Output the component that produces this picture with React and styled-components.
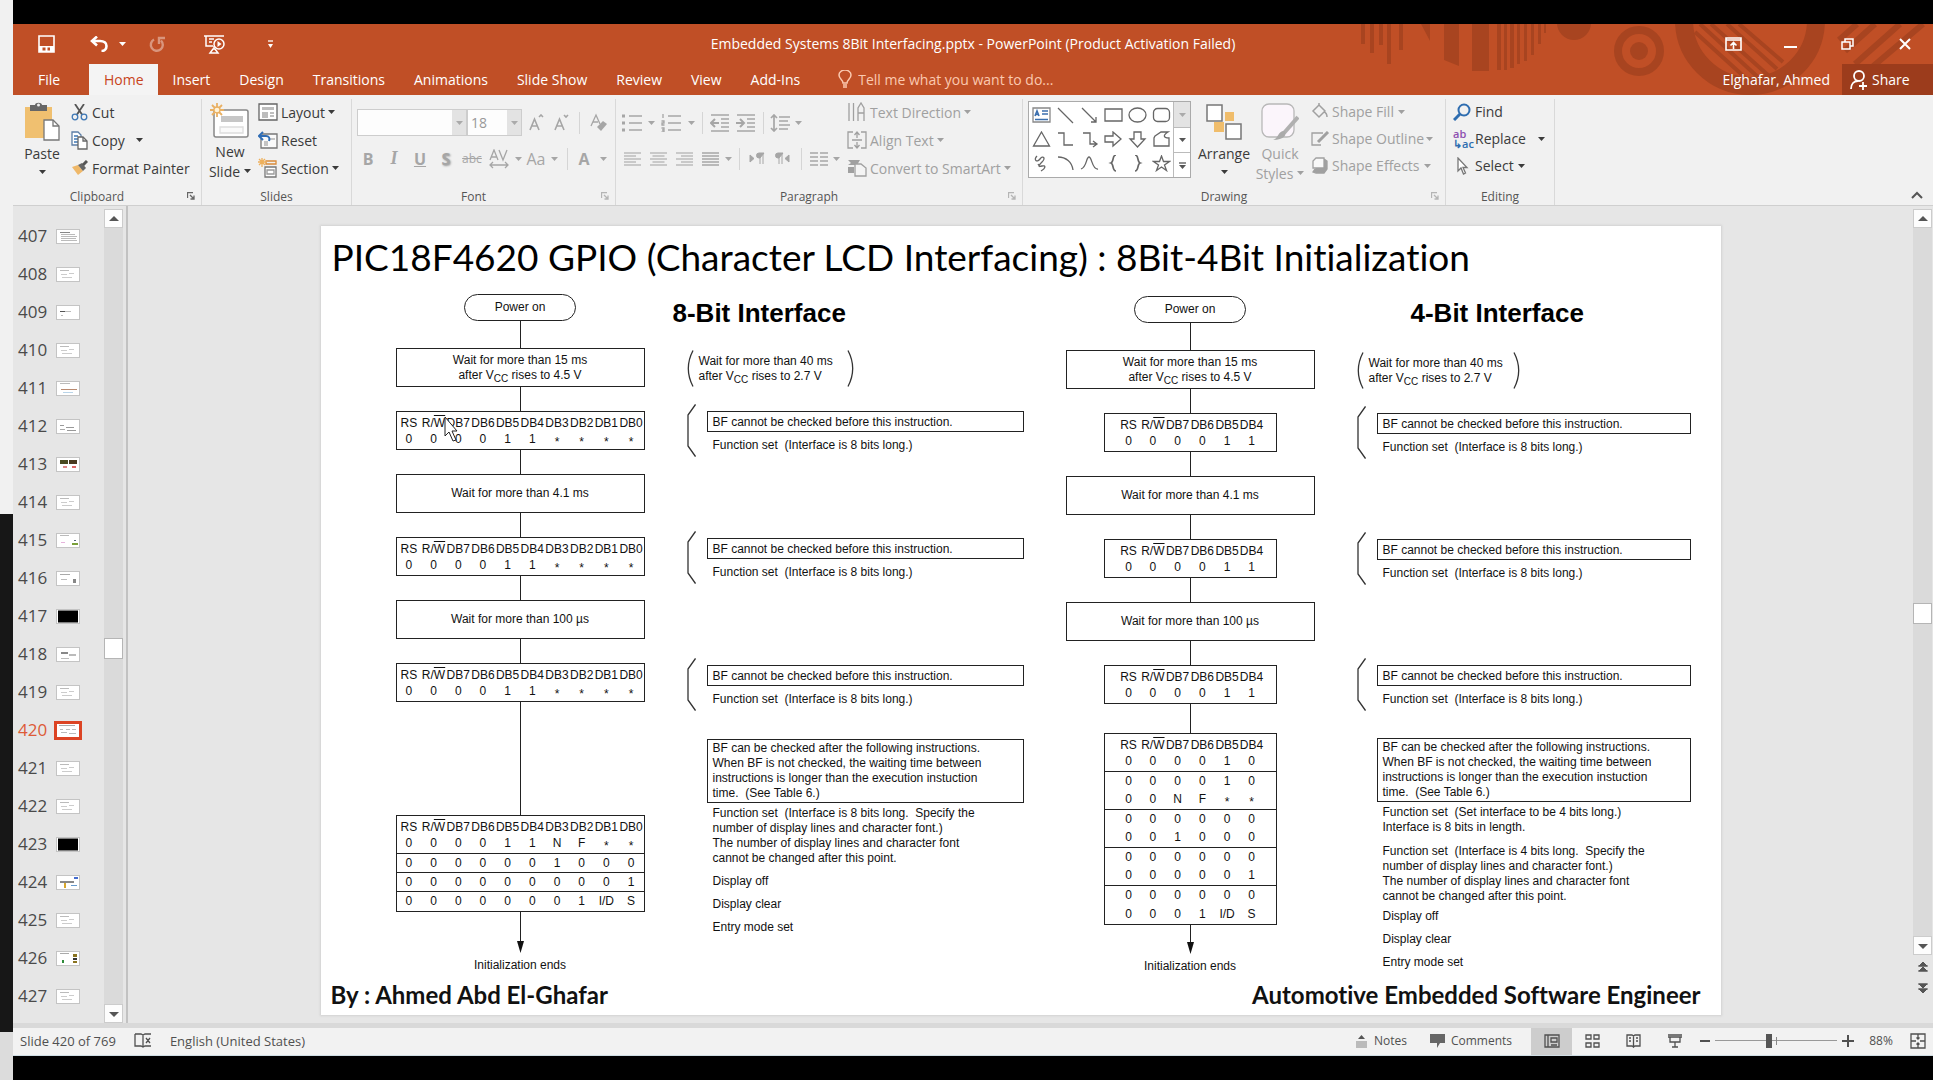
import React from "react";
import styled, { createGlobalStyle, css } from "styled-components";

const UI = '"Open Sans", "Noto Sans", sans-serif';
const SLIDE = 'Lato, "Open Sans", sans-serif';
const CHART = '"Liberation Sans", Arial, sans-serif';

const Global = createGlobalStyle`
  *, *::before, *::after { box-sizing: border-box; }
  body { margin: 0; background: #000; font-family: ${UI}; font-size: 14px; color: #444; }
  button, input, select { font: inherit; color: inherit; }
  button { background: none; border: 0; padding: 0; cursor: pointer; }
  svg { display: block; flex: none; }
`;

/* ---------- frame ---------- */

const Screen = styled.div`
  display: flex;
  min-height: 100vh;
`;
const Edge = styled.div`
  flex: 0 0 13px;
  display: flex;
  flex-direction: column;
`;
const EdgePart = styled.div`
  flex: ${(p) => p.$share} 0 0;
  background: ${(p) => p.$color};
`;
const Desktop = styled.div`
  flex: 1;
  min-width: 0;
  display: flex;
  padding: 24px 0;
  background: #000;
`;
const Window = styled.div`
  flex: 1;
  min-width: 0;
  display: flex;
  flex-direction: column;
  background: #e6e6e6;
`;

/* ---------- title bar and tabs ---------- */

const Header = styled.header`
  position: relative;
  background: #c04f26;
  color: #fff;
  overflow: hidden;
`;
const Decoration = styled.svg`
  position: absolute;
  right: 0;
  top: 0;
`;
const TitleBar = styled.div`
  position: relative;
  display: grid;
  grid-template-columns: 1fr auto 1fr;
  align-items: center;
  height: 40px;
`;
const QuickAccess = styled.div`
  display: flex;
  align-items: center;
  padding-left: 17px;
`;
const TitleButton = styled.button`
  display: grid;
  place-items: center;
  width: ${(p) => p.$w}px;
  height: 32px;
  margin-left: ${(p) => p.$before || 0}px;
  opacity: ${(p) => (p.$dim ? 0.4 : 1)};
`;
const Caption = styled.h1`
  margin: 0;
  font-size: 14px;
  font-weight: 400;
  line-height: 20px;
`;
const WindowButtons = styled.div`
  display: flex;
  justify-content: flex-end;
`;
const TabBar = styled.nav`
  position: relative;
  display: flex;
  align-items: stretch;
  height: 31px;
`;
const Tab = styled.button`
  padding: 0 14px 0 15px;
  line-height: 30px;
  color: ${(p) => (p.$active ? "#c8441b" : "#fff")};
  background: ${(p) => (p.$active ? "#f4f4f4" : "transparent")};
  ${(p) => p.$file && css`width: 76px; padding: 0 4px 0 0;`}
`;
const TellMe = styled.label`
  display: flex;
  align-items: center;
  gap: 6px;
  padding-left: 24px;
  flex: 1;
  color: #fbc9b0;
  input {
    width: 220px;
    padding: 0;
    border: 0;
    outline: 0;
    background: none;
  }
  input::placeholder { color: #fbc9b0; opacity: 1; }
`;
const Account = styled.button`
  padding: 0 12px;
  color: #fff;
`;
const Share = styled.button`
  display: flex;
  align-items: center;
  gap: 4px;
  width: 91px;
  padding-left: 8px;
  color: #fff;
  background: #9c3c1c;
`;

/* ---------- ribbon ---------- */

const Ribbon = styled.div`
  display: flex;
  height: 111px;
  padding-top: 4px;
  background: #f1f1f1;
  border-bottom: 1px solid #cfcfcf;
`;
const GroupBox = styled.section`
  display: flex;
  flex-direction: column;
  flex: 0 0 ${(p) => p.$w}px;
  border-right: 1px solid #d9d9d9;
`;
const GroupBody = styled.div`
  display: flex;
  height: 88px;
`;
const GroupFoot = styled.div`
  display: flex;
  align-items: center;
  height: 18px;
  font-size: 12px;
  color: #555;
  span { flex: 1; text-align: center; }
`;
const Launcher = styled.button`
  display: grid;
  place-items: center;
  width: 20px;
  height: 18px;
  color: ${(p) => (p.$dim ? "#b5b5b5" : "#666")};
`;
const BigButton = styled.button`
  display: flex;
  flex-direction: column;
  align-items: center;
  width: ${(p) => p.$w}px;
  padding-top: 3px;
  line-height: 20px;
  color: ${(p) => (p.$dim ? "#a0a0a0" : "#3b3b3b")};
  svg:first-child { margin-bottom: 3px; }
`;
const WithCaret = styled.span`
  display: flex;
  align-items: center;
  gap: 4px;
`;
const CaretBelow = styled.span`
  padding-top: 6px;
`;
const Stack = styled.div`
  display: flex;
  flex-direction: column;
  align-items: flex-start;
  padding-left: ${(p) => p.$pad || 0}px;
`;
const RowButton = styled.button`
  display: flex;
  align-items: center;
  gap: ${(p) => p.$gap || 4}px;
  height: ${(p) => p.$h || 28}px;
  padding-bottom: 2px;
  color: ${(p) => (p.$dim ? "#a0a0a0" : "#3b3b3b")};
  white-space: nowrap;
`;
const Tools = styled.div`
  display: flex;
  flex-direction: column;
  gap: 9px;
  width: ${(p) => p.$w}px;
  padding: 10px 0 0 3px;
`;
const ToolRow = styled.div`
  display: flex;
  height: 27px;
`;
const Tool = styled.button`
  display: grid;
  place-items: center;
  width: ${(p) => p.$w || 26}px;
  color: #a6a6a6;
  font-size: 16px;
  ${(p) => p.$bold && css`font-weight: 700;`}
  ${(p) => p.$serif && css`font-family: "Liberation Serif", serif; font-style: italic; font-weight: 700; font-size: 18px;`}
  ${(p) => p.$under && css`text-decoration: underline;`}
  ${(p) => p.$strike && css`text-decoration: line-through; font-size: 12px;`}
  ${(p) => p.$shadow && css`text-shadow: 1px 1px 2px #999;`}
`;
const Divider = styled.span`
  width: ${(p) => p.$w}px;
  background: linear-gradient(#d5d5d5, #d5d5d5) center / 1px 22px no-repeat;
`;
const Combo = styled.label`
  display: flex;
  width: ${(p) => p.$w}px;
  height: 27px;
  border: 1px solid #cdcdcd;
  background: #fdfdfd;
  color: #999;
  select {
    flex: 1;
    min-width: 0;
    padding: 0 3px;
    border: 0;
    outline: 0;
    appearance: none;
    background: none;
  }
`;
const ComboArrow = styled.span`
  display: grid;
  place-items: center;
  width: 14px;
  background: #e3e3e3;
  color: #aaa;
`;
const ComboPair = styled.div`
  display: flex;
  padding: 0 1px 0 2px;
`;
const Gallery = styled.div`
  display: flex;
  width: 163px;
  height: 77px;
  margin: 2px 6px 0 5px;
  border: 1px solid #aaa;
  background: #fff;
`;
const GalleryGrid = styled.div`
  flex: 1;
  display: grid;
  grid-template-columns: repeat(6, 24px);
  grid-auto-rows: 24px;
  align-content: center;
  button { display: grid; place-items: center; color: #666; }
`;
const GalleryNav = styled.div`
  display: grid;
  grid-template-rows: repeat(3, 1fr);
  width: 17px;
  border-left: 1px solid #bbb;
  button { display: grid; place-items: center; background: #fff; color: #555; border-top: 1px solid #bbb; }
  button:first-child { background: #e3e3e3; color: #aaa; border-top: 0; }
`;
const RibbonRest = styled.div`
  flex: 1;
  display: flex;
  align-items: flex-end;
  justify-content: flex-end;
  padding: 0 10px 3px 0;
  color: #555;
`;

/* ---------- work area ---------- */

const Work = styled.main`
  flex: 1;
  display: flex;
  min-height: 0;
  padding-right: 1px;
  border-bottom: 5px solid #d9d9d9;
`;
const SlideList = styled.ol`
  width: 91px;
  margin: 0;
  padding: 11px 0 0 5px;
  list-style: none;
`;
const SlideItem = styled.li`
  button {
    display: flex;
    align-items: center;
    gap: ${(p) => (p.$active ? 7 : 9)}px;
    height: 38px;
    font-size: 17px;
    line-height: 38px;
    color: ${(p) => (p.$active ? "#dd5a37" : "#4a4a4a")};
  }
`;
const Thumb = styled.svg`
  border: 1px solid #c4c4c4;
  background: #fff;
  ${(p) => p.$active && css`border: 3px solid #dc4424;`}
`;
const Bar = styled.div`
  display: flex;
  flex-direction: column;
  width: 19px;
  padding-top: 3px;
`;
const BarButton = styled.button`
  display: grid;
  place-items: center;
  height: 19px;
  background: #fdfdfd;
  border: 1px solid #ccc;
  color: #555;
`;
const BarTrack = styled.div`
  flex: ${(p) => p.$share} 0 0;
  background: #dadada;
`;
const BarThumb = styled.div`
  height: 21px;
  background: #fff;
  border: 1px solid #b5b5b5;
`;
const NavButton = styled.button`
  display: grid;
  place-items: center;
  height: 22px;
  color: #555;
`;
const NavEnd = styled.div`
  height: 24px;
`;
const Splitter = styled.div`
  width: 5px;
  border-right: 2px solid #c2c2c2;
`;
const Canvas = styled.div`
  flex: 1;
  min-width: 0;
  padding-top: 20px;
`;

/* ---------- slide ---------- */

const Slide = styled.article`
  position: relative;
  width: 1400px;
  max-width: 100%;
  min-height: 789px;
  margin: 0 auto;
  background: #fff;
  box-shadow: 0 0 2px 1px #d2d2d2;
  color: #111;
`;
const SlideTitle = styled.h2`
  margin: 0;
  padding: 7px 0 0 11px;
  font: 400 37px/48px ${SLIDE};
  font-variant-ligatures: none;
  color: #000;
  height: 68px;
  white-space: nowrap;
`;
const Charts = styled.div`
  display: grid;
  grid-template-columns: 249px 337px 249px 334px;
  column-gap: 42px;
  padding-left: 75px;
  height: 685px;
  font: 12px/15px ${CHART};
  white-space: pre;
`;
const Flow = styled.div`
  display: flex;
  flex-direction: column;
  align-items: center;
  padding-top: ${(p) => p.$top}px;
  text-align: center;
`;
const Pill = styled.div`
  display: grid;
  place-items: center;
  width: 112px;
  height: 27px;
  border: 1px solid #222;
  border-radius: 14px;
`;
const Link = styled.div`
  width: 1px;
  height: ${(p) => p.$h || 24}px;
  background: #222;
`;
const Step = styled.div`
  display: grid;
  place-items: center;
  align-content: center;
  width: 100%;
  height: 39px;
  border: 1px solid #222;
`;
const Vcc = styled.sub`
  font-size: 10px;
  line-height: 0;
`;
const BitBox = styled.div`
  border: 1px solid #222;
  width: ${(p) => (p.$narrow ? 173 : 249)}px;
`;
const Bits = styled.table`
  width: 100%;
  border-collapse: collapse;
  table-layout: fixed;
  th, td { padding: 0; font-weight: 400; height: 19px; text-align: center; }
  th { height: 20px; padding-top: 2px; }
  tbody tr:first-child td { height: 17px; padding-bottom: 2px; }
  tr.ruled { border-top: 1px solid #222; }
  ${(p) => p.$narrow && css`
    th:first-child, td:first-child, th:last-child, td:last-child { width: 36px; }
    th:first-child, td:first-child { padding-left: 12px; }
    th:last-child, td:last-child { padding-right: 12px; }
  `}
`;
const Over = styled.span`
  text-decoration: overline;
`;
const Star = styled.span`
  vertical-align: sub;
  line-height: 0;
`;
const Arrow = styled.svg`
  margin-bottom: 5px;
`;
const Notes = styled.div``;
const Heading = styled.h3`
  margin: 0 0 0 ${(p) => p.$indent}px;
  height: ${(p) => p.$h}px;
  font: 700 26px/38px ${CHART};
  color: #000;
`;
const Aside = styled.div`
  display: flex;
  align-items: center;
  gap: 5px;
  height: 37px;
  margin-bottom: 17px;
`;
const Spacer = styled.span`
  width: ${(p) => p.$w}px;
`;
const Condition = styled.div`
  display: flex;
  gap: 11px;
  height: 53px;
  margin-bottom: ${(p) => p.$after}px;
`;
const ConditionText = styled.div`
  flex: 1;
  padding-top: 7px;
`;
const Framed = styled.p`
  margin: 0;
  padding: ${(p) => (p.$tall ? 1 : 2)}px 0 1px 5px;
  border: 1px solid #222;
  line-height: ${(p) => (p.$tall ? 15 : 16)}px;
`;
const Plain = styled.p`
  margin: 0;
  padding: ${(p) => p.$before}px 0 0 6px;
`;
const AfterChecks = styled.div`
  padding-left: 20px;
`;
const SlideFoot = styled.footer`
  display: flex;
  justify-content: space-between;
  padding: 0 20px 0 10px;
  font: 700 24px/32px ${SLIDE};
  font-variant-ligatures: none;
  color: #111;
`;
const Pointer = styled.svg`
  position: absolute;
  left: 123px;
  top: 190px;
`;

/* ---------- status bar ---------- */

const Status = styled.footer`
  display: flex;
  align-items: stretch;
  height: 28px;
  background: #f2f2f2;
  border-bottom: 1px solid #cfdde4;
  font-size: 12px;
  color: #505050;
`;
const StatusText = styled.span`
  display: flex;
  align-items: center;
  padding: 0 0 2px ${(p) => p.$l || 0}px;
  font-size: 13px;
`;
const StatusButton = styled.button`
  display: flex;
  align-items: center;
  justify-content: center;
  gap: 6px;
  width: ${(p) => p.$w}px;
  padding-bottom: 2px;
  background: ${(p) => (p.$on ? "#cdcdcd" : "transparent")};
`;
const Spring = styled.span`
  flex: 1;
`;
const Zoom = styled.input`
  appearance: none;
  width: 122px;
  height: 25px;
  margin: 0;
  background:
    linear-gradient(#888, #888) center / 1px 8px no-repeat,
    linear-gradient(#999, #999) center / 100% 1px no-repeat;
  &::-webkit-slider-thumb {
    appearance: none;
    width: 6px;
    height: 14px;
    background: #555;
  }
`;

/* ---------- icons ---------- */

const Svg = ({ w = 18, h = w, children, ...rest }) => (
  <svg width={w} height={h} viewBox={`0 0 ${w} ${h}`} fill="none" stroke="currentColor" strokeWidth="1.3" aria-hidden="true" {...rest}>
    {children}
  </svg>
);
const Caret = () => (
  <Svg w={7} h={4}><path d="M0 0h7L3.500 4z" fill="currentColor" stroke="none" /></Svg>
);
const Tri = ({ up }) => (
  <Svg w={10} h={6}><path d={up ? "M0 5h10L5 0z" : "M0 1h10L5 6z"} fill="currentColor" stroke="none" /></Svg>
);
const DoubleTri = ({ up }) => (
  <Svg w={10} h={11}>
    <path d={up ? "M1 5h8L5 1zM1 10h8L5 6zM0 5h10M0 10h10" : "M1 1h8L5 5zM1 6h8L5 10zM0 1h10M0 6h10"} fill="currentColor" stroke="currentColor" strokeWidth="1" />
  </Svg>
);
const SaveIcon = () => (
  <Svg w={17} h={18} strokeWidth="1.600"><path d="M1 1h15v16H1z" /><path d="M1 11h15v6H1z" fill="#fff" stroke="none" /><path d="M4.500 12.500H7.500v3h-3zM9.500 12.500h2.500v3H9.500z" fill="#c04f26" stroke="none" /></Svg>
);
const UndoIcon = () => (
  <Svg w={18} h={16} strokeWidth="2.600"><path d="M2 5h8c4 0 6.500 2 6.500 5s-2 5-5 5" /><path d="M7 0.500L2 5l5 4.500" /></Svg>
);
const RedoIcon = () => (
  <Svg w={17} h={17} strokeWidth="2.400"><path d="M5 3.500A6 6 0 1 0 12 4.500" /><path d="M10 8V2h6" /></Svg>
);
const ShowIcon = () => (
  <Svg w={21} h={19} strokeWidth="1.500"><path d="M0 1h20M2 1v10h7M10 11v3M6 18h8l-3-4H9zM5 4h5M5 7h3" /><circle cx="15" cy="9" r="5" /><path d="M13.500 6l4 3-4 3z" fill="currentColor" stroke="none" /></Svg>
);
const PasteIcon = () => (
  <Svg w={36} h={39}>
    <path d="M1 5h27v31H1z" fill="#f0c070" stroke="none" />
    <path d="M6 3h5c0-3 7-3 7 0h5v6H6z" fill="#666" stroke="none" />
    <circle cx="14.500" cy="3" r="1.500" fill="#eee" stroke="none" />
    <path d="M20 18h9l6 6v14H20z" fill="#fff" stroke="#777" /><path d="M29 18v6h6" stroke="#777" />
  </Svg>
);
const CutIcon = () => (
  <Svg w={17} h={17}><path d="M4 0l7 10.500M13 0L6 10.500" stroke="#555" strokeWidth="1.800" /><circle cx="4" cy="13" r="2.800" stroke="#3f78b5" /><circle cx="13" cy="13" r="2.800" stroke="#3f78b5" /></Svg>
);
const CopyIcon = () => (
  <Svg w={17} h={19}><path d="M1 1h6l3 3v10H1z" fill="#fff" stroke="#5c7ea6" /><path d="M3 5h4M3 8h4M3 11h4" stroke="#3f78b5" /><path d="M7 6h5l4 4v8H7z" fill="#fff" stroke="#666" /><path d="M12 6v4h4" stroke="#666" /></Svg>
);
const BrushIcon = () => (
  <Svg w={17} h={16}><path d="M1 7l6-2 5 6-5 4z" fill="#efb869" stroke="none" /><path d="M7 5l4-2 4 5-3 3z" fill="#666" stroke="none" /><path d="M12 5l4-4" stroke="#555" strokeWidth="3" /></Svg>
);
const NewSlideIcon = () => (
  <Svg w={40} h={37}>
    <rect x="4" y="8" width="34" height="27" rx="2" fill="#fff" stroke="#888" strokeWidth="1.500" />
    <path d="M11 14h22v6H11z" fill="#c6c6c6" stroke="none" /><path d="M10 25h23v6H10z" fill="#fafafa" stroke="#ddd" />
    <path d="M7 1v14M0 8h14M2 3l10 10M12 3L2 13" stroke="#e9b063" strokeWidth="1.800" /><circle cx="7" cy="8" r="3" fill="#fff3d8" stroke="#e9b063" />
  </Svg>
);
const LayoutIcon = () => (
  <Svg w={20} h={18}><path d="M1 1h18v16H1z" fill="#fff" stroke="#666" /><path d="M4 4h12v3H4zM4 9h6v6H4z" fill="#bdbdbd" stroke="none" /><path d="M12 10h4M12 13h4" stroke="#aaa" /></Svg>
);
const ResetIcon = () => (
  <Svg w={20} h={18}><path d="M4 3h15v14H3V8" fill="#fafafa" stroke="#777" /><path d="M6 10h4v5H6zM12 7h5v2h-5z" fill="#c4c4c4" stroke="none" /><path d="M1 5h7c3 0 4 2 3 5M5 1L1 5l4 4" stroke="#2f6db5" strokeWidth="2" /></Svg>
);
const SectionIcon = () => (
  <Svg w={20} h={20}><path d="M8 3h10v3H8z" stroke="#d98b3a" /><path d="M7 9h11v10H7z" fill="#fff" stroke="#777" /><path d="M9 12h7v4H9z" stroke="#999" /><path d="M4 0v9M0 4h9M1 1l6 6M7 1L1 7" stroke="#eeb05c" /></Svg>
);
const LauncherIcon = () => (
  <Svg w={8} h={8}><path d="M0.500 6V0.500H6" /><path d="M3 3l4 4M7 3.500V7H3.500" /></Svg>
);
const ClearIcon = () => (
  <Svg w={19} h={20}><path d="M2 13L7 2l4 9M4 9h5" /><path d="M8 14l6-6 4 3-6 7z" fill="currentColor" stroke="none" /></Svg>
);
const SpacingAV = () => (
  <Svg w={20} h={20}><path d="M1 11L5 1l4 10M2.500 8h5M10 1l4 10 4-10M1 16h18M4 13l-3 3 3 3M16 13l3 3-3 3" /></Svg>
);
const ListIcon = ({ numbered }) => (
  <Svg w={20} h={18}>
    <path d="M7 2h13M7 9h13M7 16h13" />
    {numbered ? <path d="M2 0v4M0.500 7h2.500v2H1v2h2.500M0.500 14H3v4H0.500M1 16h2" /> : <path d="M0 2h3M0 9h3M0 16h3" strokeWidth="3" />}
  </Svg>
);
const IndentIcon = ({ out }) => (
  <Svg w={20} h={18}><path d="M1 1h18M11 5h8M11 9h8M11 13h8M1 17h18" />{out ? <path d="M9 9H1M5 5L1 9l4 4" strokeWidth="2" /> : <path d="M0 9h8M4 5l4 4-4 4" strokeWidth="2" />}</Svg>
);
const LineSpaceIcon = () => (
  <Svg w={20} h={18}><path d="M4 1v16M1 4l3-3 3 3M1 14l3 3 3-3" strokeWidth="1.700" /><path d="M9 3h11M9 7h9M9 11h11M9 15h9" /></Svg>
);
const AlignIcon = ({ kind }) => (
  <Svg w={17} h={14} strokeWidth="1.500" opacity={kind === "full" ? 1 : 0.7}>
    {[1, 4, 7, 10, 13].map((y, i) => {
      const short = i % 2 === 1 && kind !== "full" ? 5 : 0;
      const a = kind === "right" ? short : kind === "center" ? short / 2 : 0;
      const b = kind === "left" ? 17 - short : kind === "center" ? 17 - short / 2 : 17;
      return <path key={y} d={`M${a} ${y}H${b}`} />;
    })}
  </Svg>
);
const ParaIcon = ({ rtl }) => (
  <Svg w={16} h={14} strokeWidth="1">
    {rtl
      ? <path d="M5 1v11M8 1v11M9 1H4a2.500 2.500 0 0 0 0 5h1zM15 3v7l-4-3.500z" fill="currentColor" />
      : <path d="M11 1v11M14 1v11M15 1h-5a2.500 2.500 0 0 0 0 5h1zM1 3v7l4-3.500z" fill="currentColor" />}
  </Svg>
);
const ColumnsIcon = () => (
  <Svg w={18} h={14} strokeWidth="1.500"><path d="M0 1h8M0 5h8M0 9h8M0 13h8M10 1h8M10 5h8M10 9h8M10 13h8" /></Svg>
);
const DirectionIcon = () => (
  <Svg w={20} h={20}><path d="M2 1v18M6.500 1v18M11 19V6l3-5 3 5v13M11 11h6" /></Svg>
);
const AlignTextIcon = () => (
  <Svg w={20} h={18}><path d="M6 1H1v16h5M14 1h5v16h-5M5 9h10M10 1v6M10 17v-6M7.500 4L10 1l2.500 3M7.500 14l2.500 3 2.500-3" /></Svg>
);
const SmartIcon = () => (
  <Svg w={20} h={18}><path d="M1 1h12l-3 5H1l3-2zM1 8h6v6H1z" fill="currentColor" stroke="none" /><path d="M8 5h6l5 4v8H8z" fill="#f4f4f4" /></Svg>
);
const ArrangeIcon = () => (
  <Svg w={38} h={39}><path d="M20 10h9v9h-9zM9 20h10v10H9z" fill="#f0bd6b" stroke="none" /><path d="M2 3h15v16H2zM21 22h15v15H21z" fill="#fff" stroke="#777" strokeWidth="1.500" /></Svg>
);
const QuickIcon = () => (
  <Svg w={38} h={39}><rect x="1" y="2" width="32" height="33" rx="7" fill="#fbf5fb" stroke="#b8b8b8" /><path d="M37 15L23 31" stroke="#b0b0b0" strokeWidth="4" /><path d="M12 38c5-1 5-9 11-9 4 3 0 9-11 9z" fill="#aaa" stroke="none" /></Svg>
);
const FillIcon = () => (
  <Svg w={17} h={17}><path d="M8 2l6 6-6 6-6-6zM8 2V0M13 9c3 1 3 3 3 5" strokeWidth="1.500" /></Svg>
);
const OutlineIcon = () => (
  <Svg w={19} h={15}><path d="M12 2H1v12h9" /><path d="M7 11L17 1" strokeWidth="3" /></Svg>
);
const EffectsIcon = () => (
  <Svg w={17} h={17}><path d="M4 12l-2 3 3 1h8l3-4V4l-3-2" fill="currentColor" /><path d="M5 1h8v10H2V4z" fill="#f8f8f8" /></Svg>
);
const FindIcon = () => (
  <Svg w={18} h={18} stroke="#2e6db0" strokeWidth="2"><circle cx="11" cy="7" r="5.500" /><path d="M7 11l-6 6" strokeWidth="3" /></Svg>
);
const SelectIcon = () => (
  <Svg w={18} h={18}><path d="M5 1v13l3-3 2.500 6 2-1-2.500-5.500h4z" fill="#fff" stroke="#777" /></Svg>
);
const ReplaceMark = styled.span`
  display: grid;
  grid-template-columns: 1fr;
  width: 18px;
  font-size: 11px;
  font-weight: 600;
  line-height: 10px;
  text-align: left;
  b { font-weight: 600; color: #8d4fb0; }
  i { font-style: normal; text-align: right; color: #2e6db0; }
`;

const shapes = [
  <><path d="M1 1h17v14H1z" stroke="#888" /><path d="M3 9l2-5 2 5M4 7.500h2" stroke="#3b6fae" strokeWidth="1.600" /><path d="M10 4h6M10 7h6M3 12.500h13" stroke="#3b6fae" /></>,
  <path d="M2 1l15 15" />,
  <path d="M2 1l14 14M16 10v5h-5" />,
  <path d="M1 2h17v12H1z" />,
  <ellipse cx="9.500" cy="8" rx="8.500" ry="7" />,
  <rect x="1.500" y="1.500" width="16" height="13" rx="4" />,
  <path d="M9.500 1l8 14h-16z" />,
  <path d="M2 2h6v12h9" />,
  <path d="M3 2h7v11h6M13 10l4 3-4 3" />,
  <path d="M1 5h8V1l8 7-8 7v-4H1z" />,
  <path d="M6 1h7v7h4l-7.500 8L2 8h4z" />,
  <path d="M3 5l6-4h7c-5 3-5 6 1 6v8H2V7z" />,
  <path d="M5 1c-4 4 0 7 3 3 3-4 6-1 2 3s-4 5 0 4 4 2-1 5M6 9l2 3" />,
  <path d="M2 2c8 0 14 5 15 13" />,
  <path d="M1 14C7 12 6 2 9 2s3 13 9 12" />,
  <path d="M12 0c-4 0-2 7-5 8 3 1 1 8 5 8" strokeWidth="1.700" />,
  <path d="M7 0c4 0 2 7 5 8-3 1-1 8-5 8" strokeWidth="1.700" />,
  <path d="M9.500 1l2 5.500h6L12.500 10l2 5.500-5-3.500-5 3.500 2-5.500-5-3.500h6z" />,
];
const shapeNames = ["Text box", "Line", "Arrow line", "Rectangle", "Oval", "Rounded rectangle", "Triangle", "Elbow", "Elbow arrow", "Right arrow", "Down arrow", "Freeform", "Scribble", "Arc", "Curve", "Left brace", "Right brace", "Star"];

/* ---------- pieces ---------- */

const Group = ({ name, width, launcher, dim, children }) => (
  <GroupBox $w={width} aria-label={name}>
    <GroupBody>{children}</GroupBody>
    <GroupFoot>
      <span>{name}</span>
      {launcher && <Launcher $dim={dim} aria-label={`${name} settings`}><LauncherIcon /></Launcher>}
    </GroupFoot>
  </GroupBox>
);
const Drop = ({ w = 10 }) => <Tool $w={w} aria-label="More"><Caret /></Tool>;

const Scroll = ({ before, after, children }) => (
  <Bar>
    <BarButton aria-label="Scroll up"><Tri up /></BarButton>
    <BarTrack $share={before} />
    <BarThumb />
    <BarTrack $share={after} />
    <BarButton aria-label="Scroll down"><Tri /></BarButton>
    {children}
  </Bar>
);

const G = "#bbb";
const thumbArt = {
  407: [["#888", 3, 2, 10, 1], [G, 4, 4, 14, 1], [G, 4, 6, 16, 1], [G, 4, 8, 15, 1], [G, 4, 10, 16, 1]],
  409: [["#555", 3, 5, 5, 1], [G, 8, 5, 6, 1], [G, 4, 9, 2, 1]],
  411: [[G, 3, 1, 10, 1], ["#b98a70", 4, 7, 16, 1], ["#b9d4e8", 6, 10, 10, 1]],
  412: [["#999", 3, 5, 4, 1], ["#999", 9, 7, 8, 1], ["#aaa", 3, 9, 5, 1], ["#999", 10, 10, 9, 1]],
  413: [["#4a4a20", 3, 2, 8, 4], ["#4a3a20", 12, 2, 8, 4], ["#d88", 6, 8, 4, 2], ["#d66", 15, 8, 4, 2]],
  415: [[G, 3, 1, 9, 1], ["#e6b3dc", 4, 8, 4, 1], ["#7aa03a", 15, 9, 6, 2], ["#567", 17, 6, 2, 1]],
  416: [["#aaa", 3, 2, 10, 1], [G, 4, 7, 6, 1], ["#888", 16, 7, 3, 4]],
  418: [["#888", 4, 4, 7, 2], [G, 12, 6, 7, 2], [G, 4, 10, 8, 1]],
  420: [["#aaa", 2, 1, 16, 1], [G, 3, 5, 3, 1], [G, 9, 5, 4, 1], [G, 15, 5, 4, 1], [G, 4, 8, 6, 1], [G, 12, 9, 7, 1]],
  424: [["#446ccf", 17, 1, 4, 2], ["#888", 3, 5, 14, 2], ["#d9a72c", 7, 7, 2, 5], ["#69c", 14, 9, 6, 1]],
  426: [["#aaa", 3, 1, 9, 1], ["#2e8b3a", 5, 8, 2, 3], ["#8a7420", 16, 2, 4, 3], ["#333", 16, 6, 4, 2], ["#8a7420", 16, 9, 4, 2]],
};
const plainArt = [["#bbb", 3, 2, 9, 1], ["#ccc", 4, 6, 6, 1], ["#ccc", 12, 5, 5, 1], ["#ccc", 5, 9, 10, 1]];

const SlideThumb = ({ n, active }) => (
  <Thumb width={active ? 28 : 24} height={active ? 19 : 15} viewBox="0 0 22 13" $active={active} aria-hidden="true">
    {n === 417 || n === 423
      ? <rect x="1" y="0.500" width="20" height="12" fill="#000" />
      : (thumbArt[n] || plainArt).map(([c, x, y, w, h], i) => <rect key={i} x={x} y={y} width={w} height={h} fill={c} />)}
  </Thumb>
);

const Cell = ({ v }) => <td>{v === "*" ? <Star>*</Star> : v}</td>;

const BitTable = ({ names, rows, ruled = [], narrow }) => (
  <BitBox $narrow={narrow}>
    <Bits $narrow={narrow}>
      <thead>
        <tr>{names.map((n) => <th key={n} scope="col">{n === "R/W" ? <>R/<Over>W</Over></> : n}</th>)}</tr>
      </thead>
      <tbody>
        {rows.map((r, i) => (
          <tr key={i} className={ruled.includes(i) ? "ruled" : undefined}>
            {r.split(" ").map((v, j) => <Cell key={j} v={v} />)}
          </tr>
        ))}
      </tbody>
    </Bits>
  </BitBox>
);

const eight = ["RS", "R/W", "DB7", "DB6", "DB5", "DB4", "DB3", "DB2", "DB1", "DB0"];
const four = eight.slice(0, 6);

const FlowChart = ({ top, names, row, lastGap, lastRows, ruled, narrow, tail }) => (
  <Flow $top={top}>
    <Pill>Power on</Pill>
    <Link $h={27} />
    <Step><span>Wait for more than 15 ms</span><span>after V<Vcc>CC</Vcc> rises to 4.5 V</span></Step>
    {["4.1 ms", "100 µs"].map((t) => (
      <React.Fragment key={t}>
        <Link />
        <BitTable names={names} rows={[row]} narrow={narrow} />
        <Link />
        <Step>Wait for more than {t}</Step>
      </React.Fragment>
    ))}
    <Link />
    <BitTable names={names} rows={[row]} narrow={narrow} />
    <Link $h={lastGap} />
    <BitTable names={names} rows={lastRows} ruled={ruled} narrow={narrow} />
    <Link $h={tail} />
    <Arrow width="7" height="12" viewBox="0 0 7 12" aria-hidden="true"><path d="M0 0h7L3.500 12z" fill="#111" /></Arrow>
    Initialization ends
  </Flow>
);

const Paren = ({ right }) => (
  <Svg w={7} h={37}><path d={right ? "M1 0.500C7 12 7 25 1 36.500" : "M6 0.500C0 12 0 25 6 36.500"} stroke="#333" /></Svg>
);

const Interface = ({ title, indent, head, space, gaps, children }) => (
  <Notes>
    <Heading $indent={indent} $h={head}>{title}</Heading>
    <Aside>
      <Paren />
      <div>
        <div>Wait for more than 40 ms</div>
        <div>after V<Vcc>CC</Vcc> rises to 2.7 V</div>
      </div>
      <Spacer $w={space} />
      <Paren right />
    </Aside>
    {gaps.map((after, i) => (
      <Condition key={i} $after={after}>
        <Svg w={9} h={53}><path d="M8.500 0.500L1 11v31l7.500 10.500" stroke="#333" /></Svg>
        <ConditionText>
          <Framed>BF cannot be checked before this instruction.</Framed>
          <Plain $before={6}>{"Function set  (Interface is 8 bits long.)"}</Plain>
        </ConditionText>
      </Condition>
    ))}
    <AfterChecks>
      <Framed $tall>
        {"BF can be checked after the following instructions.\nWhen BF is not checked, the waiting time between\ninstructions is longer than the execution instuction\ntime.  (See Table 6.)"}
      </Framed>
      {children}
    </AfterChecks>
  </Notes>
);

const App = () => (
  <Screen>
    <Global />
    <Edge>
      <EdgePart $share={514} $color="#f1f1f1" />
      <EdgePart $share={518} $color="#171717" />
      <EdgePart $share={48} $color="#dcdcdc" />
    </Edge>
    <Desktop>
      <Window>
        <Header>
          <Decoration width="578" height="71" viewBox="0 0 578 71" fill="#a84420" aria-hidden="true">
            <path d="M6 0h4v20H6zM15 0h4v29h-4zM24 0h4v21h-4zM32 0h4v40h-4zM44 0h4v26h-4zM66 0h9v17zM89 0h15v42l-15-6zM117 0h17v47h-17z" />
            <path d="M142 0h4v46h-4zM149 0h3v46h-3zM155 0h4v44h-4zM162 0h3v40h-3zM169 0h3v37h-3zM176 0h3v31h-3zM183 0h3v20h-3zM189 0h2v9h-2z" />
            <circle cx="219" cy="-1" r="17" />
            <circle cx="284" cy="27" r="21" fill="none" stroke="#a84420" strokeWidth="8" />
            <circle cx="284" cy="27" r="9" />
            <circle cx="395" cy="-4" r="66" fill="none" stroke="#a84420" strokeWidth="18" />
            <path d="M340 8l55 50M345 0l60 55M356 0l58 52M372 0l50 45M384 0l44 38" stroke="#a84420" strokeWidth="4" />
            <path d="M484 16L502 0M490 27L520 0M500 40L545 0M516 44L568 0" stroke="#a84420" strokeWidth="6" />
          </Decoration>
          <TitleBar>
            <QuickAccess>
              <TitleButton $w={32} aria-label="Save"><SaveIcon /></TitleButton>
              <TitleButton $w={32} $before={21} aria-label="Undo"><UndoIcon /></TitleButton>
              <TitleButton $w={14} aria-label="Undo history"><Caret /></TitleButton>
              <TitleButton $w={30} $before={13} $dim aria-label="Repeat"><RedoIcon /></TitleButton>
              <TitleButton $w={30} $before={27} aria-label="Start from beginning"><ShowIcon /></TitleButton>
              <TitleButton $w={30} $before={26} aria-label="Customize toolbar"><Svg w={5} h={8}><path d="M0 1h5" /><path d="M0 4h5L2.500 8z" fill="currentColor" stroke="none" /></Svg></TitleButton>
            </QuickAccess>
            <Caption>Embedded Systems 8Bit Interfacing.pptx - PowerPoint (Product Activation Failed)</Caption>
            <WindowButtons>
              <TitleButton $w={57} aria-label="Ribbon display options"><Svg w={17} h={14} strokeWidth="1.600"><path d="M1 1h15v12H1zM1 3h15M8.500 12V6M5.500 8.500l3-3 3 3" /></Svg></TitleButton>
              <TitleButton $w={57} aria-label="Minimize"><Svg w={13} h={14} strokeWidth="2"><path d="M0 10h13" /></Svg></TitleButton>
              <TitleButton $w={57} aria-label="Restore"><Svg w={13} h={12} strokeWidth="1.500"><path d="M1 4h8v7H1zM4 4V1h8v7H9" /></Svg></TitleButton>
              <TitleButton $w={57} aria-label="Close"><Svg w={12} h={12} strokeWidth="2"><path d="M1 1l10 10M11 1L1 11" /></Svg></TitleButton>
            </WindowButtons>
          </TitleBar>
          <TabBar>
            <Tab $file>File</Tab>
            <Tab $active>Home</Tab>
            {["Insert", "Design", "Transitions", "Animations", "Slide Show", "Review", "View", "Add-Ins"].map((t) => <Tab key={t}>{t}</Tab>)}
            <TellMe>
              <Svg w={14} h={19} strokeWidth="1.500"><path d="M5 13c0-3-4-4-4-8a6 5 0 0 1 12 0c0 4-4 5-4 8zM5 15h4M5 17h4" /></Svg>
              <input placeholder="Tell me what you want to do..." aria-label="Tell me what you want to do" />
            </TellMe>
            <Account>Elghafar, Ahmed</Account>
            <Share>
              <Svg w={18} h={20} strokeWidth="1.800"><circle cx="9" cy="6" r="5" /><path d="M1 19c0-5 3-8 7-8M9 16h8M13 12v8" /></Svg>
              Share
            </Share>
          </TabBar>
        </Header>

        <Ribbon>
          <Group name="Clipboard" width={189} launcher>
            <BigButton $w={58}><PasteIcon />Paste<CaretBelow><Caret /></CaretBelow></BigButton>
            <Stack>
              <RowButton><CutIcon />Cut</RowButton>
              <RowButton><CopyIcon /><span>Copy</span>&nbsp;<Caret /></RowButton>
              <RowButton><BrushIcon />Format Painter</RowButton>
            </Stack>
          </Group>
          <Group name="Slides" width={150}>
            <BigButton $w={56}><NewSlideIcon />New<WithCaret>Slide<Caret /></WithCaret></BigButton>
            <Stack>
              <RowButton $gap={3}><LayoutIcon />Layout<Caret /></RowButton>
              <RowButton $gap={3}><ResetIcon />Reset</RowButton>
              <RowButton $gap={3}><SectionIcon />Section<Caret /></RowButton>
            </Stack>
          </Group>
          <Group name="Font" width={264} launcher dim>
            <Tools $w={263}>
              <ToolRow>
                <ComboPair>
                  <Combo $w={110}><select aria-label="Font" defaultValue=""><option value="" /></select><ComboArrow><Caret /></ComboArrow></Combo>
                  <Combo $w={55}><select aria-label="Font size"><option>18</option></select><ComboArrow><Caret /></ComboArrow></Combo>
                </ComboPair>
                <Tool aria-label="Increase font size"><Svg w={16} h={17} strokeWidth="1.600"><path d="M2 16L6.500 5 11 16M4 12h5M11 3l2-2 2 2" /></Svg></Tool>
                <Tool $w={24} aria-label="Decrease font size"><Svg w={16} h={17} strokeWidth="1.600"><path d="M2 16L6.500 5 11 16M4 12h5M11 1l2 2 2-2" /></Svg></Tool>
                <Divider $w={12} />
                <Tool aria-label="Clear formatting"><ClearIcon /></Tool>
              </ToolRow>
              <ToolRow>
                <Tool $bold>B</Tool><Tool $serif>I</Tool><Tool $under $bold>U</Tool><Tool $bold $shadow>S</Tool><Tool $strike>abc</Tool>
                <Tool $w={28} aria-label="Character spacing"><SpacingAV /></Tool><Drop />
                <Tool>Aa</Tool><Drop />
                <Divider $w={16} />
                <Tool $w={18} $bold>A</Tool><Drop w={20} />
              </ToolRow>
            </Tools>
          </Group>
          <Group name="Paragraph" width={407} launcher dim>
            <Tools $w={231}>
              <ToolRow>
                <Tool aria-label="Bullets"><ListIcon /></Tool><Drop w={12} />
                <Tool $w={28} aria-label="Numbering"><ListIcon numbered /></Tool><Drop w={12} />
                <Divider $w={10} />
                <Tool aria-label="Decrease indent"><IndentIcon out /></Tool><Tool aria-label="Increase indent"><IndentIcon /></Tool>
                <Divider $w={8} />
                <Tool aria-label="Line spacing"><LineSpaceIcon /></Tool><Drop />
              </ToolRow>
              <ToolRow>
                <Tool aria-label="Align left"><AlignIcon kind="left" /></Tool>
                <Tool aria-label="Center"><AlignIcon kind="center" /></Tool>
                <Tool aria-label="Align right"><AlignIcon kind="right" /></Tool>
                <Tool aria-label="Justify"><AlignIcon kind="full" /></Tool><Drop />
                <Divider $w={12} />
                <Tool $w={24} aria-label="Left to right"><ParaIcon /></Tool><Tool aria-label="Right to left"><ParaIcon rtl /></Tool>
                <Divider $w={12} />
                <Tool $w={24} aria-label="Columns"><ColumnsIcon /></Tool><Drop />
              </ToolRow>
            </Tools>
            <Stack>
              <RowButton $dim $gap={3}><DirectionIcon />Text Direction <Caret /></RowButton>
              <RowButton $dim $gap={3}><AlignTextIcon />Align Text <Caret /></RowButton>
              <RowButton $dim $gap={3}><SmartIcon />Convert to SmartArt <Caret /></RowButton>
            </Stack>
          </Group>
          <Group name="Drawing" width={423} launcher dim>
            <Gallery>
              <GalleryGrid>
                {shapes.map((s, i) => <button key={i} aria-label={shapeNames[i]}><Svg w={19} h={17}>{s}</Svg></button>)}
              </GalleryGrid>
              <GalleryNav>
                <button aria-label="Previous shapes"><Caret /></button>
                <button aria-label="Next shapes"><Caret /></button>
                <button aria-label="All shapes"><Svg w={7} h={7}><path d="M0 1h7" /><path d="M0 3h7L3.500 7z" fill="currentColor" stroke="none" /></Svg></button>
              </GalleryNav>
            </Gallery>
            <BigButton $w={54}><ArrangeIcon />Arrange<CaretBelow><Caret /></CaretBelow></BigButton>
            <BigButton $w={58} $dim><QuickIcon />Quick<WithCaret>Styles<Caret /></WithCaret></BigButton>
            <Stack $pad={2}>
              <RowButton $h={27} $dim><FillIcon />Shape Fill <Caret /></RowButton>
              <RowButton $h={27} $dim $gap={2}><OutlineIcon />Shape Outline <Caret /></RowButton>
              <RowButton $h={27} $dim><EffectsIcon />Shape Effects <Caret /></RowButton>
            </Stack>
          </Group>
          <Group name="Editing" width={109}>
            <Stack $pad={7}>
              <RowButton $h={27}><FindIcon />Find</RowButton>
              <RowButton $h={27}><ReplaceMark><b>ab</b><i>↳ac</i></ReplaceMark><span>Replace</span>&nbsp;<Caret /></RowButton>
              <RowButton $h={27}><SelectIcon />Select <Caret /></RowButton>
            </Stack>
          </Group>
          <RibbonRest>
            <button aria-label="Collapse ribbon"><Svg w={12} h={12} strokeWidth="2"><path d="M1 8l5-5 5 5" /></Svg></button>
          </RibbonRest>
        </Ribbon>

        <Work>
          <SlideList>
            {Array.from({ length: 21 }, (_, i) => 407 + i).map((n) => (
              <SlideItem key={n} $active={n === 420}>
                <button><span>{n}</span><SlideThumb n={n} active={n === 420} /></button>
              </SlideItem>
            ))}
          </SlideList>
          <Scroll before={411} after={346} />
          <Splitter />
          <Canvas>
            <Slide>
              <SlideTitle>PIC18F4620 GPIO (Character LCD Interfacing) : 8Bit-4Bit Initialization</SlideTitle>
              <Charts>
                <FlowChart
                  top={0}
                  names={eight}
                  row="0 0 0 0 1 1 * * * *"
                  lastGap={113}
                  lastRows={["0 0 0 0 1 1 N F * *", "0 0 0 0 0 0 1 0 0 0", "0 0 0 0 0 0 0 0 0 1", "0 0 0 0 0 0 0 1 I/D S"]}
                  ruled={[1, 2, 3]}
                  tail={29}
                />
                <Interface title="8-Bit Interface" indent={-14} head={56} space={4} gaps={[74, 74, 28]}>
                  <Plain $before={3}>{"Function set  (Interface is 8 bits long.  Specify the\nnumber of display lines and character font.)\nThe number of display lines and character font\ncannot be changed after this point."}</Plain>
                  <Plain $before={8}>Display off</Plain>
                  <Plain $before={8}>Display clear</Plain>
                  <Plain $before={8}>Entry mode set</Plain>
                </Interface>
                <FlowChart
                  top={2}
                  names={four}
                  row="0 0 0 0 1 1"
                  lastGap={29}
                  lastRows={["0 0 0 0 1 0", "0 0 0 0 1 0", "0 0 N F * *", "0 0 0 0 0 0", "0 0 1 0 0 0", "0 0 0 0 0 0", "0 0 0 0 0 1", "0 0 0 0 0 0", "0 0 0 1 I/D S"]}
                  ruled={[1, 3, 5, 7]}
                  narrow
                  tail={17}
                />
                <Interface title="4-Bit Interface" indent={54} head={58} space={0} gaps={[73, 73, 27]}>
                  <Plain $before={3}>{"Function set  (Set interface to be 4 bits long.)\nInterface is 8 bits in length."}</Plain>
                  <Plain $before={9}>{"Function set  (Interface is 4 bits long.  Specify the\nnumber of display lines and character font.)\nThe number of display lines and character font\ncannot be changed after this point."}</Plain>
                  <Plain $before={5}>Display off</Plain>
                  <Plain $before={8}>Display clear</Plain>
                  <Plain $before={8}>Entry mode set</Plain>
                </Interface>
              </Charts>
              <SlideFoot><span>By : Ahmed Abd El-Ghafar</span><span>Automotive Embedded Software Engineer</span></SlideFoot>
              <Pointer width="14" height="26" viewBox="0 0 14 26" aria-hidden="true">
                <path d="M1 1v19l4-4 4 9 3-1-4-9h5z" fill="#fff" stroke="#222" />
              </Pointer>
            </Slide>
          </Canvas>
          <Scroll before={377} after={314}>
            <NavButton aria-label="Previous slide"><DoubleTri up /></NavButton>
            <NavButton aria-label="Next slide"><DoubleTri /></NavButton>
            <NavEnd />
          </Scroll>
        </Work>

        <Status>
          <StatusText $l={7}>Slide 420 of 769</StatusText>
          <StatusButton $w={54} aria-label="Spelling"><Svg w={18} h={15}><path d="M9 2v12M1 1h6l2 1 2-1h6M1 1v12h6l2 1 2-1h6M12 5l4 5M16 5l-4 5" /></Svg></StatusButton>
          <StatusText>English (United States)</StatusText>
          <Spring />
          <StatusButton $w={60}><Svg w={13} h={14}><path d="M1 7h11v7H1z" fill="#bbb" stroke="none" /><path d="M3 5h7L6.500 1z" fill="#555" stroke="none" /></Svg>Notes</StatusButton>
          <StatusButton $w={120}><Svg w={15} h={15}><path d="M0 1h15v9h-5l-3 5v-5H0z" fill="#666" stroke="none" /></Svg>Comments</StatusButton>
          <StatusButton $w={41} $on aria-label="Normal view"><Svg w={16} h={14}><path d="M1 1h14v12H1zM4 1v12M7 4h6v4H7zM7 11h6" /></Svg></StatusButton>
          <StatusButton $w={41} aria-label="Slide sorter"><Svg w={15} h={14}><path d="M1 1h5v4H1zM9 1h5v4H9zM1 9h5v4H1zM9 9h5v4H9z" /></Svg></StatusButton>
          <StatusButton $w={41} aria-label="Reading view"><Svg w={15} h={14}><path d="M7.500 2v12M1 1h5l1.500 1L9 1h5v11H9l-1.500 1L6 12H1zM3 4h2M3 7h2M10 4h2M10 7h2" /></Svg></StatusButton>
          <StatusButton $w={41} aria-label="Slide show"><Svg w={14} h={14}><path d="M0 1h14M0 3h14M2 3v5h10V3M7 8v5M4 13h6" /></Svg></StatusButton>
          <StatusButton $w={20} aria-label="Zoom out"><Svg w={10} h={10} strokeWidth="2"><path d="M0 5h10" /></Svg></StatusButton>
          <Zoom type="range" min="10" max="400" defaultValue="182" aria-label="Zoom" />
          <StatusButton $w={22} aria-label="Zoom in"><Svg w={12} h={12} strokeWidth="2"><path d="M0 6h12M6 0v12" /></Svg></StatusButton>
          <StatusButton $w={44}>88%</StatusButton>
          <StatusButton $w={30} aria-label="Fit slide to window"><Svg w={16} h={16}><path d="M1 1h14v14H1zM8 1v5M8 10v5M1 8h5M10 8h5M6.500 4.500L8 6l1.500-1.500M6.500 11.500L8 10l1.500 1.500" /></Svg></StatusButton>
        </Status>
      </Window>
    </Desktop>
  </Screen>
);

export default App;
